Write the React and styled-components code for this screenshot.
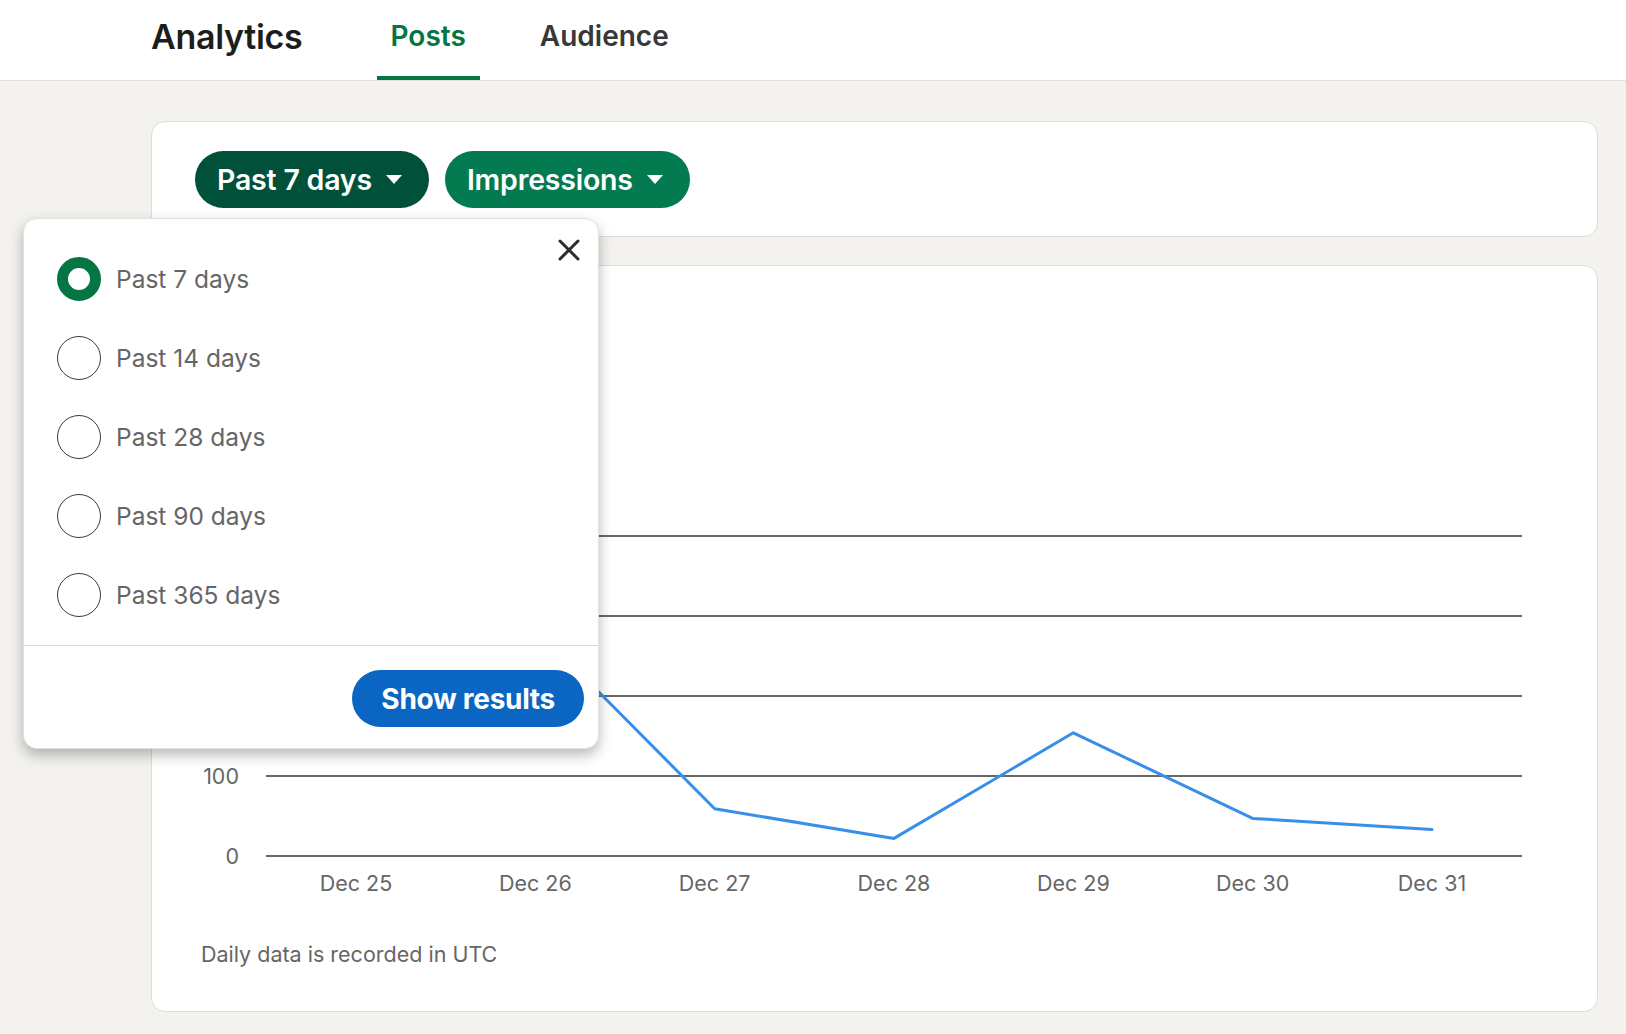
import React, { useState } from "react";
import styled, { createGlobalStyle } from "styled-components";

const GlobalStyle = createGlobalStyle`
  * { box-sizing: border-box; }
  body {
    margin: 0;
    background: #f3f2ef;
    font-family: Inter, "Noto Sans", "Liberation Sans", sans-serif;
    -webkit-font-smoothing: antialiased;
  }
`;

//Data
const days = ["Dec 25", "Dec 26", "Dec 27", "Dec 28", "Dec 29", "Dec 30", "Dec 31"];
const values = [180, 285, 59, 22, 154, 47, 33];
const ranges = ["Past 7 days", "Past 14 days", "Past 28 days", "Past 90 days", "Past 365 days"];
//Only these tick labels sit outside the open dropdown
const ticks = [
  { v: 0, label: "0" },
  { v: 100, label: "100" },
  { v: 200 },
  { v: 300 },
  { v: 400 },
];

const Caret = () => (
  <svg width="16" height="9" viewBox="0 0 16 9">
    <path d="M0 0 L16 0 L8 9 Z" fill="#fff" />
  </svg>
);

const CloseIcon = () => (
  <svg width="22" height="22" viewBox="0 0 22 22">
    <path d="M2 2 L20 20 M20 2 L2 20" stroke="#2d2d2d" strokeWidth="3" strokeLinecap="round" />
  </svg>
);

const Chart = () => {
  const W = 1321;
  const H = 620;
  const left = 65;
  const right = W;
  const zeroY = 570;
  const scale = 0.8;
  const x0 = 155;
  const step = 179.33;
  const points = values
    .map((v, i) => `${x0 + i * step},${zeroY - v * scale}`)
    .join(" ");
  return (
    <svg width={W} height={H} viewBox={`0 0 ${W} ${H}`}>
      {ticks.map((t) => (
        <g key={t.v}>
          <line
            x1={left}
            x2={right}
            y1={zeroY - t.v * scale}
            y2={zeroY - t.v * scale}
            stroke="#333"
            strokeWidth="1.5"
          />
          {t.label && (
            <text
              x={38}
              y={zeroY - t.v * scale + 8}
              textAnchor="end"
              fontSize="21.5"
              fill="#666"
              fontFamily="Inter, sans-serif"
            >
              {t.label}
            </text>
          )}
        </g>
      ))}
      {days.map((d, i) => (
        <text
          key={d}
          x={x0 + i * step}
          y={605}
          textAnchor="middle"
          fontSize="21.5"
          fill="#666"
          fontFamily="Inter, sans-serif"
        >
          {d}
        </text>
      ))}
      <polyline
        points={points}
        fill="none"
        stroke="#378fe9"
        strokeWidth="3"
        strokeLinejoin="round"
        strokeLinecap="round"
      />
    </svg>
  );
};

const App = () => {
  const [selected, setSelected] = useState(0);
  return (
    <>
      <GlobalStyle />
      <Header>
        <Title>Analytics</Title>
        <Tabs>
          <Tab active>Posts</Tab>
          <Tab>Audience</Tab>
        </Tabs>
      </Header>
      <Main>
        <FilterCard>
          <Pill dark>
            Past 7 days
            <Caret />
          </Pill>
          <Pill>
            Impressions
            <Caret />
          </Pill>
        </FilterCard>
        <ChartCard>
          <Chart />
          <Footnote>Daily data is recorded in UTC</Footnote>
        </ChartCard>
        <Dropdown>
          <CloseButton>
            <CloseIcon />
          </CloseButton>
          <Options>
            {ranges.map((r, i) => (
              <Option key={r} onClick={() => setSelected(i)}>
                <Radio checked={selected === i} />
                {r}
              </Option>
            ))}
          </Options>
          <DropdownFooter>
            <ShowButton>Show results</ShowButton>
          </DropdownFooter>
        </Dropdown>
      </Main>
    </>
  );
};

const Header = styled.header`
  height: 81px;
  background: #fff;
  border-bottom: 1px solid #e0dfdc;
  display: flex;
  align-items: stretch;
  padding-left: 151px;
`;

const Title = styled.h1`
  margin: 0;
  font-size: 34px;
  font-weight: 600;
  color: #1d1d1d;
  letter-spacing: -0.3px;
  display: flex;
  align-items: center;
  padding-bottom: 8px;
`;

const Tabs = styled.nav`
  display: flex;
  gap: 46px;
  margin-left: 74px;
`;

const Tab = styled.div`
  display: flex;
  align-items: center;
  padding: 0 14px 4px;
  font-size: 28px;
  font-weight: 600;
  color: ${(p) => (p.active ? "#057642" : "#383838")};
  border-bottom: 4px solid ${(p) => (p.active ? "#057642" : "transparent")};
`;

const Main = styled.main`
  position: relative;
  padding: 40px 28px 25px 151px;
`;

const Card = styled.section`
  background: #fff;
  border: 1px solid #dedcd8;
  border-radius: 14px;
`;

const FilterCard = styled(Card)`
  display: flex;
  gap: 16px;
  padding: 29px 43px 28px;
`;

const Pill = styled.button`
  display: flex;
  align-items: center;
  gap: 14px;
  height: 57px;
  padding: 0 27px 0 22px;
  border: none;
  border-radius: 29px;
  background: ${(p) => (p.dark ? "#01513a" : "#037a50")};
  color: #fff;
  font-family: inherit;
  font-size: 28.5px;
  font-weight: 600;
  letter-spacing: -0.2px;
`;

const ChartCard = styled(Card)`
  margin-top: 28px;
  padding: 20px 76px 44px 49px;
`;

const Footnote = styled.p`
  margin: 31px 0 0;
  font-size: 21.5px;
  color: #666;
`;

const Dropdown = styled.div`
  position: absolute;
  top: 137px;
  left: 23px;
  width: 576px;
  background: #fff;
  border-radius: 14px;
  border: 1px solid #e4e2df;
  box-shadow: 0 6px 14px rgba(0, 0, 0, 0.28);
`;

const CloseButton = styled.button`
  position: absolute;
  top: 20px;
  right: 18px;
  background: none;
  border: none;
  padding: 0;
  display: flex;
`;

const Options = styled.div`
  display: flex;
  flex-direction: column;
  gap: 35px;
  padding: 38px 0 28px 33px;
`;

const Option = styled.label`
  display: flex;
  align-items: center;
  gap: 15px;
  font-size: 24.5px;
  color: #666;
  cursor: pointer;
`;

const Radio = styled.span`
  width: 44px;
  height: 44px;
  border-radius: 50%;
  border: ${(p) => (p.checked ? "11px solid #057642" : "1.5px solid #3a3a3a")};
  flex-shrink: 0;
`;

const DropdownFooter = styled.div`
  border-top: 1px solid #d6d6d6;
  display: flex;
  justify-content: flex-end;
  padding: 24px 14px 21px;
`;

const ShowButton = styled.button`
  height: 57px;
  padding: 0 29px;
  border: none;
  border-radius: 29px;
  background: #0a66c2;
  color: #fff;
  font-family: inherit;
  font-size: 28px;
  font-weight: 700;
  letter-spacing: -0.3px;
`;

export default App;
